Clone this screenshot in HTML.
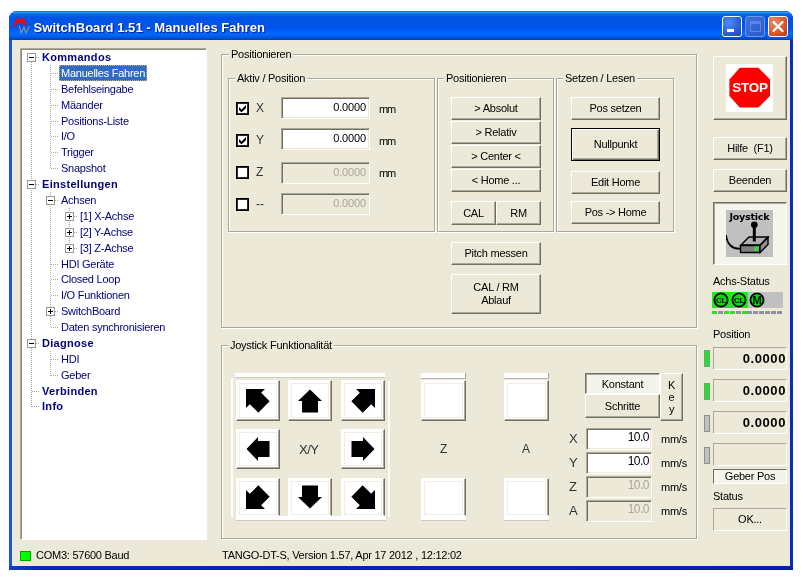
<!DOCTYPE html><html><head><meta charset="utf-8"><title>SwitchBoard</title><style>
*{box-sizing:border-box;margin:0;padding:0}
html,body{width:803px;height:577px;overflow:hidden;background:#fff}
body{font-family:"Liberation Sans",sans-serif;font-size:11px;color:#000;position:relative;letter-spacing:-0.25px}
#root{position:absolute;left:0;top:0;width:803px;height:577px;will-change:transform}
.abs{position:absolute}
#win{position:absolute;left:9px;top:11px;width:784px;height:559px;background:linear-gradient(to right,#1C54D8 0,#1C54D8 4px,#0A2CBE 5px,#0A2CBE 100%);border-radius:8px 8px 0 0;overflow:hidden}
#tb{position:absolute;left:0;top:0;width:784px;height:29px;background:linear-gradient(to bottom,#0058EE 0%,#3593FF 4%,#288EFF 6%,#127DFF 8%,#036FFC 10%,#0262EE 14%,#0057E5 20%,#0054E3 24%,#0055EB 56%,#005BF5 66%,#026AFE 76%,#0062EF 86%,#0054DC 92%,#0048C8 96%,#0040BC 100%)}
#title{position:absolute;left:24.5px;top:9px;color:#fff;font-weight:bold;font-size:13px;letter-spacing:0.05px;text-shadow:1px 1px 1px #0A1883;white-space:nowrap}
#client{position:absolute;left:3px;top:29px;width:778px;height:526px;background:#ECE9D8}
.tbtn{position:absolute;top:5px;width:20px;height:21px;border:1px solid #fff;border-radius:3px;background:radial-gradient(circle at 30% 30%,#4B8CF5 0%,#2A5FDB 60%,#1941A5 100%)}
.gb{position:absolute;border:1px solid #ACA899;box-shadow:1px 1px 0 #fff, inset 1px 1px 0 #fff}
.gbl{position:absolute;background:#ECE9D8;padding:0 2px;white-space:nowrap;line-height:13px}
.btn{position:absolute;background:#ECE9D8;border:1px solid;border-color:#fff #716F64 #716F64 #fff;box-shadow:inset -1px -1px 0 #ACA899;text-align:center;white-space:nowrap;display:flex;align-items:center;justify-content:center;line-height:13px}
.inp{position:absolute;background:#fff;border:1px solid;border-color:#ACA899 #fff #fff #ACA899;box-shadow:inset 1px 1px 0 #716F64, inset -1px -1px 0 #ECE9D8;text-align:right;line-height:13px;white-space:nowrap}
.inp.dis{background:#ECE9D8;color:#ACA899}
.cb{position:absolute;width:13px;height:13px;border:1px solid #000;box-shadow:inset 0 0 0 1px #2a2a2a;background:#fff}
.lbl{position:absolute;white-space:nowrap;line-height:13px}
.ti{position:absolute;height:16px;line-height:16px;color:#000080;white-space:nowrap;padding:0 2px}
.ti.b{font-weight:bold;letter-spacing:0.3px}
.ti.sel{background:#316AC5;color:#fff;outline:1px dotted #d0b060;outline-offset:-1px}
.box{position:absolute;width:9px;height:9px;border:1px solid #989898;background:#fff}
.box i{position:absolute;left:1px;top:3px;width:5px;height:1px;background:#000}
.box b{position:absolute;left:3px;top:1px;width:1px;height:5px;background:#000}
.hd{position:absolute;height:1px;background-image:linear-gradient(to right,#a8a8a8 50%,transparent 50%);background-size:2px 1px}
.vd{position:absolute;width:1px;background-image:linear-gradient(to bottom,#a8a8a8 50%,transparent 50%);background-size:1px 2px}
.disp{position:absolute;border:1px solid;border-color:#ACA899 #fff #fff #ACA899;font-weight:bold;font-size:13px;text-align:right;line-height:21px;padding-right:0px;letter-spacing:0.6px}
.ind{position:absolute;width:6px;height:17px;border:1px solid #808080}
</style></head><body><div id="root">
<div id="win"><div id="tb">
<svg class="abs" style="left:4px;top:6px" width="20" height="18" viewBox="0 0 20 18"><path d="M2 8 L4.8 2.2 L7.2 5.5 L9.8 2.2 L12 7.5" fill="none" stroke="#f00" stroke-width="2.6" stroke-linejoin="round" stroke-linecap="round"/><path d="M6.2 9 L8.3 16 L11 10 L12.8 16 L16.5 9" fill="none" stroke="#7d8fa8" stroke-width="1.2"/></svg>
<div id="title">SwitchBoard 1.51 - Manuelles Fahren</div>
<div class="tbtn" style="left:713px"><div class="abs" style="left:4px;top:12px;width:7px;height:3px;background:#fff"></div></div>
<div class="tbtn" style="left:736px;border-color:#6f95e6;background:linear-gradient(135deg,#3c72dc,#2a5acb)"><div class="abs" style="left:4px;top:4px;width:11px;height:11px;border:1px solid #5f86df;border-top-width:3px"></div></div>
<div class="tbtn" style="left:759px;background:radial-gradient(circle at 30% 30%,#EB8B6C 0%,#D9532B 60%,#B5361A 100%)"><svg class="abs" style="left:0;top:0" width="18" height="19" viewBox="0 0 18 19"><path d="M4.5 5 L13.5 14 M13.5 5 L4.5 14" stroke="#fff" stroke-width="2.2" stroke-linecap="round"/></svg></div>
</div>
<div class="abs" style="left:0;top:555px;width:784px;height:4px;background:linear-gradient(to right,#1440C8 0,#0C26B4 30px,#0A1EAC 100%)"></div><div id="client"></div>
</div>
<div class="abs" style="left:20px;top:48px;width:187px;height:492px;background:#fff;border:1px solid;border-color:#ACA899 #fff #fff #ACA899;box-shadow:inset 1px 1px 0 #8c8a7e"></div>
<div class="vd" style="left:31px;top:62px;height:345px"></div>
<div class="vd" style="left:50px;top:65px;height:104px"></div>
<div class="vd" style="left:50px;top:192px;height:136px"></div>
<div class="vd" style="left:50px;top:351px;height:25px"></div>
<div class="vd" style="left:69px;top:208px;height:41px"></div>
<div class="hd" style="left:36px;top:57px;width:4px"></div>
<div class="box" style="left:27px;top:53px"><i></i></div>
<div class="ti b" style="left:40px;top:49px">Kommandos</div>
<div class="hd" style="left:51px;top:73px;width:8px"></div>
<div class="ti sel" style="left:59px;top:65px">Manuelles Fahren</div>
<div class="hd" style="left:51px;top:89px;width:8px"></div>
<div class="ti" style="left:59px;top:81px">Befehlseingabe</div>
<div class="hd" style="left:51px;top:105px;width:8px"></div>
<div class="ti" style="left:59px;top:97px">Mäander</div>
<div class="hd" style="left:51px;top:121px;width:8px"></div>
<div class="ti" style="left:59px;top:113px">Positions-Liste</div>
<div class="hd" style="left:51px;top:136px;width:8px"></div>
<div class="ti" style="left:59px;top:128px">I/O</div>
<div class="hd" style="left:51px;top:152px;width:8px"></div>
<div class="ti" style="left:59px;top:144px">Trigger</div>
<div class="hd" style="left:51px;top:168px;width:8px"></div>
<div class="ti" style="left:59px;top:160px">Snapshot</div>
<div class="hd" style="left:36px;top:184px;width:4px"></div>
<div class="box" style="left:27px;top:180px"><i></i></div>
<div class="ti b" style="left:40px;top:176px">Einstellungen</div>
<div class="hd" style="left:55px;top:200px;width:4px"></div>
<div class="box" style="left:46px;top:196px"><i></i></div>
<div class="ti" style="left:59px;top:192px">Achsen</div>
<div class="hd" style="left:74px;top:216px;width:4px"></div>
<div class="box" style="left:65px;top:212px"><i></i><b></b></div>
<div class="ti" style="left:78px;top:208px">[1] X-Achse</div>
<div class="hd" style="left:74px;top:232px;width:4px"></div>
<div class="box" style="left:65px;top:228px"><i></i><b></b></div>
<div class="ti" style="left:78px;top:224px">[2] Y-Achse</div>
<div class="hd" style="left:74px;top:248px;width:4px"></div>
<div class="box" style="left:65px;top:244px"><i></i><b></b></div>
<div class="ti" style="left:78px;top:240px">[3] Z-Achse</div>
<div class="hd" style="left:51px;top:264px;width:8px"></div>
<div class="ti" style="left:59px;top:256px">HDI Geräte</div>
<div class="hd" style="left:51px;top:279px;width:8px"></div>
<div class="ti" style="left:59px;top:271px">Closed Loop</div>
<div class="hd" style="left:51px;top:295px;width:8px"></div>
<div class="ti" style="left:59px;top:287px">I/O Funktionen</div>
<div class="hd" style="left:55px;top:311px;width:4px"></div>
<div class="box" style="left:46px;top:307px"><i></i><b></b></div>
<div class="ti" style="left:59px;top:303px">SwitchBoard</div>
<div class="hd" style="left:51px;top:327px;width:8px"></div>
<div class="ti" style="left:59px;top:319px">Daten synchronisieren</div>
<div class="hd" style="left:36px;top:343px;width:4px"></div>
<div class="box" style="left:27px;top:339px"><i></i></div>
<div class="ti b" style="left:40px;top:335px">Diagnose</div>
<div class="hd" style="left:51px;top:359px;width:8px"></div>
<div class="ti" style="left:59px;top:351px">HDI</div>
<div class="hd" style="left:51px;top:375px;width:8px"></div>
<div class="ti" style="left:59px;top:367px">Geber</div>
<div class="hd" style="left:32px;top:391px;width:8px"></div>
<div class="ti b" style="left:40px;top:383px">Verbinden</div>
<div class="hd" style="left:32px;top:406px;width:8px"></div>
<div class="ti b" style="left:40px;top:398px">Info</div>
<div class="gb" style="left:221px;top:54px;width:476px;height:274px"></div>
<div class="gbl" style="left:229px;top:48px">Positionieren</div>
<div class="gb" style="left:228px;top:78px;width:207px;height:154px"></div>
<div class="gbl" style="left:235px;top:72px">Aktiv / Position</div>
<div class="gb" style="left:437px;top:78px;width:117px;height:154px"></div>
<div class="gbl" style="left:444px;top:72px">Positionieren</div>
<div class="gb" style="left:556px;top:78px;width:118px;height:154px"></div>
<div class="gbl" style="left:563px;top:72px">Setzen / Lesen</div>
<div class="cb" style="left:236px;top:102px"><svg class="abs" style="left:2px;top:2px" width="7" height="7" viewBox="0 0 7 7"><path d="M0 2 v3 l2.5 2.5 l4.5 -4.5 v-3 l-4.5 4.5 z" fill="#000"/></svg></div>
<div class="lbl" style="left:256px;top:102px;font-size:12px;color:#333;letter-spacing:0">X</div>
<div class="inp" style="left:281px;top:97px;width:89px;height:22px;padding:3px 4px 0 0;padding-right:3px;letter-spacing:-0.15px">0.0000</div>
<div class="lbl" style="left:379px;top:103px;letter-spacing:-1.1px">mm</div>
<div class="cb" style="left:236px;top:134px"><svg class="abs" style="left:2px;top:2px" width="7" height="7" viewBox="0 0 7 7"><path d="M0 2 v3 l2.5 2.5 l4.5 -4.5 v-3 l-4.5 4.5 z" fill="#000"/></svg></div>
<div class="lbl" style="left:256px;top:134px;font-size:12px;color:#333;letter-spacing:0">Y</div>
<div class="inp" style="left:281px;top:128px;width:89px;height:22px;padding:3px 4px 0 0;padding-right:3px;letter-spacing:-0.15px">0.0000</div>
<div class="lbl" style="left:379px;top:135px;letter-spacing:-1.1px">mm</div>
<div class="cb" style="left:236px;top:166px"></div>
<div class="lbl" style="left:256px;top:166px;font-size:12px;color:#333;letter-spacing:0">Z</div>
<div class="inp dis" style="left:281px;top:162px;width:89px;height:22px;padding:3px 4px 0 0;padding-right:3px;letter-spacing:-0.15px">0.0000</div>
<div class="lbl" style="left:379px;top:167px;letter-spacing:-1.1px">mm</div>
<div class="cb" style="left:236px;top:198px"></div>
<div class="lbl" style="left:256px;top:198px;font-size:12px;color:#333;letter-spacing:0">--</div>
<div class="inp dis" style="left:281px;top:193px;width:89px;height:22px;padding:3px 4px 0 0;padding-right:3px;letter-spacing:-0.15px">0.0000</div>
<div class="btn" style="left:451px;top:97px;width:90px;height:23px;">&gt; Absolut</div>
<div class="btn" style="left:451px;top:121px;width:90px;height:23px;">&gt; Relativ</div>
<div class="btn" style="left:451px;top:145px;width:90px;height:23px;">&gt; Center &lt;</div>
<div class="btn" style="left:451px;top:169px;width:90px;height:23px;">&lt; Home ...</div>
<div class="btn" style="left:451px;top:201px;width:45px;height:24px;">CAL</div>
<div class="btn" style="left:496px;top:201px;width:45px;height:24px;">RM</div>
<div class="btn" style="left:571px;top:97px;width:89px;height:23px;">Pos setzen</div>
<div class="btn" style="left:571px;top:128px;width:89px;height:33px;border:1px solid #000;box-shadow:inset 1px 1px 0 #fff, inset -1px -1px 0 #716F64, inset -2px -2px 0 #ACA899">Nullpunkt</div>
<div class="btn" style="left:571px;top:171px;width:89px;height:23px;">Edit Home</div>
<div class="btn" style="left:571px;top:201px;width:89px;height:23px;">Pos -&gt; Home</div>
<div class="btn" style="left:451px;top:242px;width:90px;height:23px;">Pitch messen</div>
<div class="btn" style="left:451px;top:274px;width:90px;height:40px;">CAL / RM<br>Ablauf</div>
<div class="btn" style="left:713px;top:56px;width:74px;height:64px;"></div>
<svg class="abs" style="left:726px;top:64px" width="47" height="48" viewBox="0 0 47 48"><rect width="47" height="48" fill="#fff"/><polygon points="13.8,3.8 32.5,3.8 44,15.5 44,32 32.5,43.6 13.8,43.6 3.4,32 3.4,15.5" fill="#f00"/><text x="24" y="28.4" font-family="Liberation Sans, sans-serif" font-weight="bold" font-size="12.6" fill="#fff" text-anchor="middle" textLength="35.5" lengthAdjust="spacingAndGlyphs">STOP</text></svg>
<div class="btn" style="left:713px;top:137px;width:74px;height:23px;">Hilfe&nbsp; (F1)</div>
<div class="btn" style="left:713px;top:169px;width:74px;height:23px;">Beenden</div>
<div class="abs" style="left:713px;top:202px;width:74px;height:63px;background:#F6F5EC;border:1px solid;border-color:#716F64 #fff #fff #716F64;box-shadow:inset 1px 1px 0 #ACA899"></div>
<svg class="abs" style="left:726px;top:210px" width="47" height="47" viewBox="0 0 47 47"><rect width="47" height="47" fill="#c0c0c0"/><text x="23.4" y="10" font-family="DejaVu Sans, sans-serif" font-weight="bold" font-size="9" fill="#000" text-anchor="middle" textLength="40" lengthAdjust="spacingAndGlyphs">Joystick</text><path d="M0 25 C1 34 6 39.5 14.5 38.5" fill="none" stroke="#000" stroke-width="1.8"/><polygon points="15,35 23,27 42,27 34,35" fill="#b0b0b0" stroke="#000" stroke-width="1.4"/><polygon points="14.5,35.5 34,35.5 34,42.5 14.5,42.5" fill="#808080" stroke="#000" stroke-width="1.4"/><polygon points="34,35.5 42,27.5 42,34.5 34,42.5" fill="#909090" stroke="#000" stroke-width="1.4"/><rect x="28.3" y="36.5" width="4.2" height="4.2" fill="#2ee040"/><path d="M28.3 31.5 V15" stroke="#000" stroke-width="3"/><circle cx="28.3" cy="14.8" r="3.3" fill="#000"/></svg>
<div class="lbl" style="left:713px;top:275px;">Achs-Status</div>
<div class="abs" style="left:712px;top:292px;width:71px;height:16px;background:#c0c0c0"></div>
<div class="abs" style="left:712px;top:292px;width:36px;height:16px;background:#1fe81f"></div>
<svg class="abs" style="left:712px;top:292px" width="18" height="16" viewBox="0 0 18 16"><circle cx="9" cy="8" r="6.6" fill="#00e000" stroke="#000" stroke-width="1.8"/><text x="9" y="10.8" font-family="Liberation Sans, sans-serif" font-weight="bold" font-size="8" text-anchor="middle" fill="#000">CL</text></svg>
<svg class="abs" style="left:730px;top:292px" width="18" height="16" viewBox="0 0 18 16"><circle cx="9" cy="8" r="6.6" fill="#00e000" stroke="#000" stroke-width="1.8"/><text x="9" y="10.8" font-family="Liberation Sans, sans-serif" font-weight="bold" font-size="8" text-anchor="middle" fill="#000">CL</text></svg>
<svg class="abs" style="left:748px;top:292px" width="18" height="16" viewBox="0 0 18 16"><circle cx="9" cy="8" r="6.6" fill="#00e000" stroke="#000" stroke-width="1.8"/><text x="9" y="11.8" font-family="Liberation Sans, sans-serif" font-weight="bold" font-size="11" text-anchor="middle" fill="#000">M</text></svg>
<div class="abs" style="left:712px;top:311px;width:5px;height:3px;background:#1fe81f"></div>
<div class="abs" style="left:717.9px;top:311px;width:5px;height:3px;background:#9090a0"></div>
<div class="abs" style="left:723.8px;top:311px;width:5px;height:3px;background:#1fe81f"></div>
<div class="abs" style="left:729.7px;top:311px;width:5px;height:3px;background:#1fe81f"></div>
<div class="abs" style="left:735.6px;top:311px;width:5px;height:3px;background:#9090a0"></div>
<div class="abs" style="left:741.5px;top:311px;width:5px;height:3px;background:#1fe81f"></div>
<div class="abs" style="left:747.4px;top:311px;width:5px;height:3px;background:#9090a0"></div>
<div class="abs" style="left:753.3px;top:311px;width:5px;height:3px;background:#9090a0"></div>
<div class="abs" style="left:759.2px;top:311px;width:5px;height:3px;background:#9090a0"></div>
<div class="abs" style="left:765.1px;top:311px;width:5px;height:3px;background:#9090a0"></div>
<div class="abs" style="left:771px;top:311px;width:5px;height:3px;background:#9090a0"></div>
<div class="abs" style="left:776.9px;top:311px;width:5px;height:3px;background:#9090a0"></div>
<div class="lbl" style="left:713px;top:328px;">Position</div>
<div class="disp" style="left:713px;top:347px;width:74px;height:23px">0.0000</div>
<div class="ind" style="left:704px;top:350px;background:#2bdc36;border-color:#6aa870"></div>
<div class="disp" style="left:713px;top:379px;width:74px;height:23px">0.0000</div>
<div class="ind" style="left:704px;top:383px;background:#2bdc36;border-color:#6aa870"></div>
<div class="disp" style="left:713px;top:411px;width:74px;height:23px">0.0000</div>
<div class="ind" style="left:704px;top:415px;background:#c0c0c0;border-color:#909090"></div>
<div class="disp" style="left:713px;top:443px;width:74px;height:23px"></div>
<div class="ind" style="left:704px;top:447px;background:#c0c0c0;border-color:#909090"></div>
<div class="abs" style="left:713px;top:469px;width:74px;height:15px;border:1px solid;border-color:#716F64 #fff #fff #716F64;background:#F5F4EA;text-align:center;line-height:13px">Geber Pos</div>
<div class="lbl" style="left:713px;top:490px;">Status</div>
<div class="abs" style="left:713px;top:508px;width:74px;height:23px;border:1px solid;border-color:#ACA899 #fff #fff #ACA899;text-align:center;line-height:21px">OK...</div>
<div class="gb" style="left:221px;top:345px;width:476px;height:194px"></div>
<div class="gbl" style="left:228px;top:339px">Joystick Funktionalität</div>
<div class="abs" style="left:235px;top:373px;width:150px;height:5px;background:#fff;border-bottom:1px solid #CFCCBE"></div>
<div class="abs" style="left:236px;top:516px;width:150px;height:5px;background:#fff;border-bottom:1px solid #CFCCBE"></div>
<div class="abs" style="left:231px;top:378px;width:2px;height:139px;background:#fff;"></div>
<div class="abs" style="left:388px;top:381px;width:2px;height:136px;background:#fff;"></div>
<div class="btn" style="left:236px;top:380px;width:44px;height:41px;background:#fff;border-color:#fff #716F64 #716F64 #fff;box-shadow:inset -1px -1px 0 #ACA899, inset 2px 2px 0 #fff, inset -2px -2px 0 #fff, inset 3px 3px 0 #F0EEE4, inset -3px -3px 0 #F0EEE4"><svg width="24" height="24" viewBox="0 0 24 24"><polygon points="0,0 19,0 15.16,3.84 23.65,12.33 12.33,23.65 3.84,15.16 0,19" fill="#000" transform="rotate(0 12 12)"/></svg></div>
<div class="btn" style="left:288px;top:380px;width:44px;height:41px;background:#fff;border-color:#fff #716F64 #716F64 #fff;box-shadow:inset -1px -1px 0 #ACA899, inset 2px 2px 0 #fff, inset -2px -2px 0 #fff, inset 3px 3px 0 #F0EEE4, inset -3px -3px 0 #F0EEE4"><svg width="24" height="24" viewBox="0 0 24 24"><polygon points="12,0 24,11.5 20,11.5 20,23 4,23 4,11.5 0,11.5" fill="#000" transform="translate(0 0.5) rotate(0 12 11.5)"/></svg></div>
<div class="btn" style="left:341px;top:380px;width:44px;height:41px;background:#fff;border-color:#fff #716F64 #716F64 #fff;box-shadow:inset -1px -1px 0 #ACA899, inset 2px 2px 0 #fff, inset -2px -2px 0 #fff, inset 3px 3px 0 #F0EEE4, inset -3px -3px 0 #F0EEE4"><svg width="24" height="24" viewBox="0 0 24 24"><polygon points="0,0 19,0 15.16,3.84 23.65,12.33 12.33,23.65 3.84,15.16 0,19" fill="#000" transform="rotate(90 12 12)"/></svg></div>
<div class="btn" style="left:236px;top:429px;width:44px;height:40px;background:#fff;border-color:#fff #716F64 #716F64 #fff;box-shadow:inset -1px -1px 0 #ACA899, inset 2px 2px 0 #fff, inset -2px -2px 0 #fff, inset 3px 3px 0 #F0EEE4, inset -3px -3px 0 #F0EEE4"><svg width="24" height="24" viewBox="0 0 24 24"><polygon points="12,0 24,11.5 20,11.5 20,23 4,23 4,11.5 0,11.5" fill="#000" transform="translate(0 0.5) rotate(-90 12 11.5)"/></svg></div>
<div class="btn" style="left:341px;top:429px;width:44px;height:40px;background:#fff;border-color:#fff #716F64 #716F64 #fff;box-shadow:inset -1px -1px 0 #ACA899, inset 2px 2px 0 #fff, inset -2px -2px 0 #fff, inset 3px 3px 0 #F0EEE4, inset -3px -3px 0 #F0EEE4"><svg width="24" height="24" viewBox="0 0 24 24"><polygon points="12,0 24,11.5 20,11.5 20,23 4,23 4,11.5 0,11.5" fill="#000" transform="translate(0 0.5) rotate(90 12 11.5)"/></svg></div>
<div class="btn" style="left:236px;top:478px;width:44px;height:38px;background:#fff;border-color:#fff #716F64 #fff #fff;box-shadow:inset -1px 0 0 #ACA899, inset 2px 2px 0 #fff, inset -2px 0 0 #fff, inset 3px 3px 0 #F0EEE4, inset -3px -1px 0 #F0EEE4"><svg width="24" height="24" viewBox="0 0 24 24"><polygon points="0,0 19,0 15.16,3.84 23.65,12.33 12.33,23.65 3.84,15.16 0,19" fill="#000" transform="rotate(-90 12 12)"/></svg></div>
<div class="btn" style="left:288px;top:478px;width:44px;height:38px;background:#fff;border-color:#fff #716F64 #fff #fff;box-shadow:inset -1px 0 0 #ACA899, inset 2px 2px 0 #fff, inset -2px 0 0 #fff, inset 3px 3px 0 #F0EEE4, inset -3px -1px 0 #F0EEE4"><svg width="24" height="24" viewBox="0 0 24 24"><polygon points="12,0 24,11.5 20,11.5 20,23 4,23 4,11.5 0,11.5" fill="#000" transform="translate(0 0.5) rotate(180 12 11.5)"/></svg></div>
<div class="btn" style="left:341px;top:478px;width:44px;height:38px;background:#fff;border-color:#fff #716F64 #fff #fff;box-shadow:inset -1px 0 0 #ACA899, inset 2px 2px 0 #fff, inset -2px 0 0 #fff, inset 3px 3px 0 #F0EEE4, inset -3px -1px 0 #F0EEE4"><svg width="24" height="24" viewBox="0 0 24 24"><polygon points="0,0 19,0 15.16,3.84 23.65,12.33 12.33,23.65 3.84,15.16 0,19" fill="#000" transform="rotate(180 12 12)"/></svg></div>
<div class="lbl" style="left:299px;top:443px;color:#333;font-size:13px;letter-spacing:-0.5px">X/Y</div>
<div class="abs" style="left:421px;top:373px;width:45px;height:6px;background:#fff;border-bottom:1px solid #B8B5A8;border-right:1px solid #ACA899"></div>
<div class="btn" style="left:421px;top:380px;width:45px;height:41px;background:#fff;border-color:#fff #716F64 #716F64 #fff;box-shadow:inset -1px -1px 0 #ACA899, inset 2px 2px 0 #fff, inset -2px -2px 0 #fff, inset 3px 3px 0 #F0EEE4, inset -3px -3px 0 #F0EEE4"></div>
<div class="btn" style="left:421px;top:478px;width:45px;height:38px;background:#fff;border-color:#fff #716F64 #fff #fff;box-shadow:inset -1px 0 0 #ACA899, inset 2px 2px 0 #fff, inset -2px 0 0 #fff, inset 3px 3px 0 #F0EEE4, inset -3px -1px 0 #F0EEE4"></div>
<div class="abs" style="left:421px;top:516px;width:45px;height:5px;background:#fff;border-bottom:1px solid #CFCCBE"></div>
<div class="lbl" style="left:440px;top:443px;color:#333;font-size:12px;letter-spacing:0">Z</div>
<div class="abs" style="left:504px;top:373px;width:45px;height:6px;background:#fff;border-bottom:1px solid #B8B5A8;border-right:1px solid #ACA899"></div>
<div class="btn" style="left:504px;top:380px;width:45px;height:41px;background:#fff;border-color:#fff #716F64 #716F64 #fff;box-shadow:inset -1px -1px 0 #ACA899, inset 2px 2px 0 #fff, inset -2px -2px 0 #fff, inset 3px 3px 0 #F0EEE4, inset -3px -3px 0 #F0EEE4"></div>
<div class="btn" style="left:504px;top:478px;width:45px;height:38px;background:#fff;border-color:#fff #716F64 #fff #fff;box-shadow:inset -1px 0 0 #ACA899, inset 2px 2px 0 #fff, inset -2px 0 0 #fff, inset 3px 3px 0 #F0EEE4, inset -3px -1px 0 #F0EEE4"></div>
<div class="abs" style="left:504px;top:516px;width:45px;height:5px;background:#fff;border-bottom:1px solid #CFCCBE"></div>
<div class="lbl" style="left:522px;top:443px;color:#333;font-size:12px;letter-spacing:0">A</div>
<div class="abs" style="left:585px;top:373px;width:75px;height:21px;border:1px solid;border-color:#716F64 #fff #fff #716F64;box-shadow:inset 1px 1px 0 #ACA899;background:#F5F4EA;text-align:center;line-height:21px">Konstant</div>
<div class="btn" style="left:585px;top:394px;width:75px;height:24px;">Schritte</div>
<div class="btn" style="left:660px;top:373px;width:23px;height:48px;line-height:12px">K<br>e<br>y</div>
<div class="inp" style="left:586px;top:428px;width:66px;height:22px;padding:3px 4px 0 0;font-size:12px;letter-spacing:-0.5px;padding-top:2px;padding-right:2px">10.0</div>
<div class="lbl" style="left:569px;top:432px;font-size:13px;color:#333;letter-spacing:0">X</div>
<div class="lbl" style="left:661px;top:433px;">mm/s</div>
<div class="inp" style="left:586px;top:452px;width:66px;height:22px;padding:3px 4px 0 0;font-size:12px;letter-spacing:-0.5px;padding-top:2px;padding-right:2px">10.0</div>
<div class="lbl" style="left:569px;top:456px;font-size:13px;color:#333;letter-spacing:0">Y</div>
<div class="lbl" style="left:661px;top:457px;">mm/s</div>
<div class="inp dis" style="left:586px;top:476px;width:66px;height:22px;padding:3px 4px 0 0;font-size:12px;letter-spacing:-0.5px;padding-top:2px;padding-right:2px">10.0</div>
<div class="lbl" style="left:569px;top:480px;font-size:13px;color:#333;letter-spacing:0">Z</div>
<div class="lbl" style="left:661px;top:481px;">mm/s</div>
<div class="inp dis" style="left:586px;top:500px;width:66px;height:22px;padding:3px 4px 0 0;font-size:12px;letter-spacing:-0.5px;padding-top:2px;padding-right:2px">10.0</div>
<div class="lbl" style="left:569px;top:504px;font-size:13px;color:#333;letter-spacing:0">A</div>
<div class="lbl" style="left:661px;top:505px;">mm/s</div>
<div class="abs" style="left:20px;top:551px;width:11px;height:10px;background:#0f0;border:1px solid #00a000"></div>
<div class="lbl" style="left:36px;top:549px;">COM3: 57600 Baud</div>
<div class="lbl" style="left:222px;top:549px;">TANGO-DT-S, Version 1.57, Apr 17 2012 , 12:12:02</div>
</div></body></html>
